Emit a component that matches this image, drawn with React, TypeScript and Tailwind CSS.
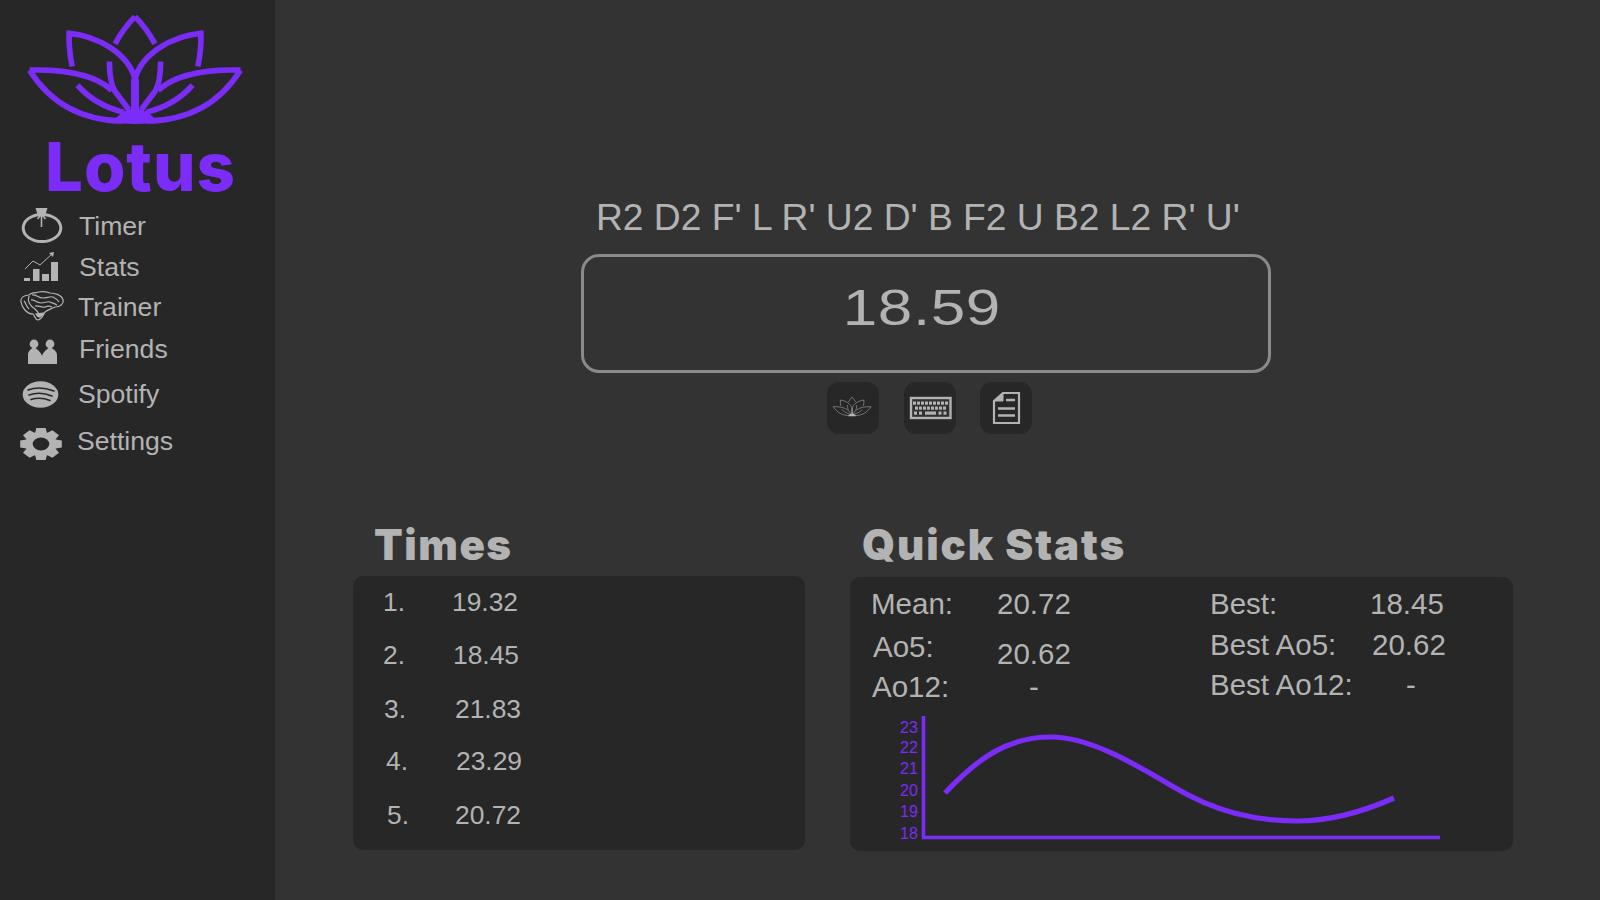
import React from "react";

const sans = "font-['Liberation_Sans',sans-serif]";
const PURPLE = "#7b2cf6";
const GRAY = "#b3b3b3";

function LotusHalf({ sw }: { sw: number }) {
  return (
    <g fill="none" strokeWidth={sw} strokeLinecap="butt" strokeLinejoin="miter">
      <path d="M405,50 C385,70 362,100 345,132" />
      <path d="M216,200 C210,170 205,140 207,100 C290,108 385,160 405,238" />
      <path d="M88,211 C190,208 285,225 336,272" />
      <path d="M88,211 C150,310 240,362 370,364" />
      <path d="M328,185 C328,220 332,255 345,275 C360,295 372,310 386,330" />
      <path d="M232,256 C270,300 320,325 372,338" />
      <path d="M405,238 L405,335" strokeWidth={sw * 1.4} />
    </g>
  );
}

function Lotus({ color, sw, className }: { color: string; sw: number; className: string }) {
  return (
    <svg viewBox="0 0 840 400" className={className} stroke={color} fill="none">
      <LotusHalf sw={sw} />
      <g transform="translate(810,0) scale(-1,1)">
        <LotusHalf sw={sw} />
      </g>
      <path d="M335,368 Q405,285 475,368 Q405,378 335,368 Z" fill={color} stroke="none" />
    </svg>
  );
}

function TimerIcon() {
  return (
    <svg viewBox="20 206 44 40" className="w-[44px] h-[40px] shrink-0" fill="none" stroke={GRAY}>
      <ellipse cx="42" cy="228" rx="18.8" ry="13.6" strokeWidth="3" />
      <path d="M35.5,208 H47.5 L45.5,214.5 H37.5 Z" fill={GRAY} stroke="none" />
      <path d="M41.5,227 V214 M37.5,219 L41.5,214 L45.5,219" strokeWidth="1.6" />
    </svg>
  );
}

function StatsIcon() {
  return (
    <svg viewBox="20 246 44 40" className="w-[44px] h-[40px] shrink-0" fill={GRAY}>
      <rect x="24" y="277" width="6" height="3" />
      <rect x="33" y="268" width="6.5" height="12" />
      <rect x="42" y="273" width="7" height="7" />
      <rect x="51" y="261" width="7" height="19" />
      <path d="M25,268 L33,260 L40,264 L53,252" fill="none" stroke={GRAY} strokeWidth="1" />
      <path d="M49,252 L54,251 L53,256 Z" />
    </svg>
  );
}

function BrainIcon() {
  return (
    <svg viewBox="20 287 44 40" className="w-[44px] h-[40px] shrink-0" fill="none" stroke={GRAY} strokeWidth="1.2">
      <path d="M21,302 C20,297 25,295 29,295 C31,292 37,293 39,292 C43,291 47,292 50,293 C55,293 62,295 63,300 C64,304 60,307 55,307 C51,309 47,310 45,312 C43,315 42,319 38,320 C35,320 35,316 33,314 C27,314 22,308 21,302 Z" />
      <path d="M29,296 C27,301 30,306 35,309 C37,311 38,312 39,314" />
      <path d="M32,295 C36,294 38,298 43,298 C47,298 50,296 53,297 C55,298 57,299 59,302" />
      <path d="M31,300 C34,299 36,303 41,303 C45,303 47,301 50,302 C52,303 54,303 57,305" />
      <path d="M35,306 C38,305 41,308 45,307 C47,306 50,306 52,307" />
      <path d="M24,301 C26,303 26,306 29,309" />
      <path d="M36,314 C38,318 41,318 44,313 Z" fill={GRAY} />
    </svg>
  );
}

function FriendsIcon() {
  return (
    <svg viewBox="20 328 44 40" className="w-[44px] h-[40px] shrink-0" fill={GRAY}>
      <circle cx="34" cy="343" r="4.4" />
      <circle cx="50" cy="343" r="4.4" />
      <path d="M28,363 V354 C28,350 31,348 34,346 C37,348 41,351 42,355 C43,351 47,348 50,346 C53,348 57,350 57,354 V363 Z" />
    </svg>
  );
}

function SpotifyIcon() {
  return (
    <svg viewBox="20 374 44 40" className="w-[44px] h-[40px] shrink-0">
      <ellipse cx="40.5" cy="394.5" rx="17.8" ry="13.2" fill={GRAY} />
      <g fill="none" stroke="#272727" strokeWidth="1.6" strokeLinecap="round">
        <path d="M28,390 C36,387 46,388 54,391" />
        <path d="M29,395 C36,392.5 45,393 52,396" />
        <path d="M31,399.5 C37,397.5 44,398 50,400.5" />
      </g>
    </svg>
  );
}

function GearIcon() {
  const angles = [0, 45, 90, 135, 180, 225, 270, 315];
  return (
    <svg viewBox="20 421 44 40" className="w-[44px] h-[40px] shrink-0">
      <g transform="translate(41,444) scale(1.3,1)" fill={GRAY}>
        {angles.map((a) => (
          <path key={a} d="M-3.6,-16 H3.6 L5,-9 H-5 Z" transform={`rotate(${a})`} />
        ))}
        <circle r="12" />
        <circle r="6.4" fill="#272727" />
      </g>
    </svg>
  );
}

function KeyboardIcon() {
  const rows: [number, number[]][] = [
    [401.5, [913, 917, 921, 925, 929, 933, 937, 941, 945]],
    [406.5, [915, 919, 923, 927, 931, 935, 939, 943]],
  ];
  return (
    <svg viewBox="904 382 52 52" className="w-[52px] h-[52px]">
      <rect x="911" y="398" width="39.5" height="20" fill="#b3b3b3" fillOpacity="0.08" stroke={GRAY} strokeWidth="2.4" />
      {rows.map(([y, xs]) =>
        xs.map((x) => <rect key={`${x}-${y}`} x={x} y={y} width="3" height="3.2" fill={GRAY} />),
      )}
      <rect x="914" y="411.5" width="3" height="3.2" fill={GRAY} />
      <rect x="919" y="411.5" width="3" height="3.2" fill={GRAY} />
      <rect x="925" y="411.5" width="11" height="3.2" fill={GRAY} />
      <rect x="938.5" y="411.5" width="3" height="3.2" fill={GRAY} />
      <rect x="943.5" y="411.5" width="3" height="3.2" fill={GRAY} />
    </svg>
  );
}

function DocIcon() {
  return (
    <svg viewBox="980 382 52 52" className="w-[52px] h-[52px]" fill="none" stroke={GRAY}>
      <path d="M1003,393 H1019 V423 H994 V401 Z" strokeWidth="2.2" />
      <path d="M1003,393 V401 H994 Z" fill={GRAY} strokeWidth="1" />
      <path d="M1006,400 H1015 M998,408.5 H1015 M998,415.5 H1015" strokeWidth="2.6" />
    </svg>
  );
}

const nav = [
  { label: "Timer", icon: <TimerIcon />, row: "mt-0", text: "ml-[15px]" },
  { label: "Stats", icon: <StatsIcon />, row: "mt-[1px]", text: "ml-[15px]" },
  { label: "Trainer", icon: <BrainIcon />, row: "mt-0", text: "ml-[14px]" },
  { label: "Friends", icon: <FriendsIcon />, row: "mt-[2px]", text: "ml-[15px]" },
  { label: "Spotify", icon: <SpotifyIcon />, row: "mt-[5px]", text: "ml-[14px]" },
  { label: "Settings", icon: <GearIcon />, row: "mt-[7px]", text: "ml-[13px]" },
];

const times = [
  { n: "1.", v: "19.32", row: "mt-0", num: "ml-[30px] w-[69px]" },
  { n: "2.", v: "18.45", row: "mt-[13px]", num: "ml-[30px] w-[70px]" },
  { n: "3.", v: "21.83", row: "mt-[14px]", num: "ml-[31px] w-[71px]" },
  { n: "4.", v: "23.29", row: "mt-[12px]", num: "ml-[33px] w-[70px]" },
  { n: "5.", v: "20.72", row: "mt-[14px]", num: "ml-[34px] w-[68px]" },
];

function Chart() {
  const labels: [string, number][] = [
    ["23", 727],
    ["22", 747],
    ["21", 768],
    ["20", 790],
    ["19", 811],
    ["18", 833],
  ];
  return (
    <svg viewBox="895 710 550 135" className="w-[550px] h-[135px] ml-[45px] mt-[3px]" fill="none">
      <path d="M923.5,716 V837.5 H1440" stroke={PURPLE} strokeWidth="3.6" />
      <path
        d="M945,793 C978,758 1008,737 1051,737 C1088,737 1130,761 1172,786 C1215,812 1255,821 1298,821 C1330,821 1360,813 1394,798"
        stroke={PURPLE}
        strokeWidth="5.2"
      />
      {labels.map(([t, y]) => (
        <text key={t} x="900" y={y + 5.5} fill={PURPLE} fontSize="16" fontFamily="Liberation Sans">
          {t}
        </text>
      ))}
    </svg>
  );
}

export default function App() {
  return (
    <div className={`flex w-[1600px] h-[900px] overflow-hidden bg-[#333333] text-[#b3b3b3] ${sans}`}>
      <aside className="w-[275px] shrink-0 bg-[#272727]">
        <Lotus color={PURPLE} sw={17} className="w-[280px] h-[133px]" />
        <div className="font-['Inter',sans-serif] font-extrabold text-[67px] leading-[67px] tracking-[1px] text-[#7b2cf6] pl-[45px]">
          Lotus
        </div>
        <nav className="mt-[6px]">
          {nav.map((item) => (
            <div key={item.label} className={`flex items-center h-[40px] pl-[20px] ${item.row}`}>
              {item.icon}
              <span className={`text-[26.6px] mt-[2px] ${item.text}`}>{item.label}</span>
            </div>
          ))}
        </nav>
      </aside>

      <main className="flex-1 pt-[195px] pl-[78px]">
        <div className="h-[44px] ml-[243px] text-[37.2px] leading-[44px] whitespace-nowrap">
          R2 D2 F' L R' U2 D' B F2 U B2 L2 R' U'
        </div>
        <div className="mt-[15px] ml-[228px] w-[690px] h-[119px] rounded-[18px] border-[3px] border-[#8a8a8a] flex items-center justify-center pb-[12px] pr-[9px]">
          <span className="text-[50px] leading-none scale-x-[1.24] tracking-[0.5px]">18.59</span>
        </div>
        <div className="mt-[9px] ml-[474px] flex gap-[24px]">
          <button className="w-[52px] h-[52px] rounded-[12px] bg-[#272727] flex items-center justify-center pb-[4px]">
            <Lotus color={GRAY} sw={9} className="w-[50px] h-[24px]" />
          </button>
          <button className="w-[52px] h-[52px] rounded-[12px] bg-[#272727] ml-[1px]">
            <KeyboardIcon />
          </button>
          <button className="w-[52px] h-[52px] rounded-[12px] bg-[#272727]">
            <DocIcon />
          </button>
        </div>

        <div className="mt-[87px] flex gap-[45px]">
          <section className="w-[452px]">
            <h2 className="ml-[21px] h-[48px] font-['Inter',sans-serif] font-black text-[42px] leading-[48px] tracking-[1.5px]">
              Times
            </h2>
            <div className="mt-[7px] h-[274px] rounded-[10px] bg-[#272727] pt-[7px]">
              {times.map((t) => (
                <div key={t.n} className={`flex items-center h-[40px] text-[26.4px] ${t.row}`}>
                  <span className={t.num}>{t.n}</span>
                  <span>{t.v}</span>
                </div>
              ))}
            </div>
          </section>

          <section className="w-[663px]">
            <h2 className="ml-[12px] h-[48px] font-['Inter',sans-serif] font-black text-[42px] leading-[48px] tracking-[1.9px] whitespace-nowrap">
              Quick Stats
            </h2>
            <div className="mt-[8px] h-[274px] rounded-[10px] bg-[#272727] pt-[7px] text-[29.5px]">
              <div className="flex pl-[21px]">
                <div className="w-[339px]">
                  <div className="flex items-center h-[40px]">
                    <span className="w-[126px]">Mean:</span>
                    <span>20.72</span>
                  </div>
                  <div className="flex items-center h-[40px] mt-[3px]">
                    <span className="w-[124px] ml-[2px]">Ao5:</span>
                    <span className="mt-[14px]">20.62</span>
                  </div>
                  <div className="flex items-center h-[40px]">
                    <span className="w-[157px] ml-[1px]">Ao12:</span>
                    <span>-</span>
                  </div>
                </div>
                <div>
                  <div className="flex items-center h-[40px]">
                    <span className="w-[160px]">Best:</span>
                    <span>18.45</span>
                  </div>
                  <div className="flex items-center h-[40px] mt-[1px]">
                    <span className="w-[162px]">Best Ao5:</span>
                    <span>20.62</span>
                  </div>
                  <div className="flex items-center h-[40px]">
                    <span className="w-[196px]">Best Ao12:</span>
                    <span>-</span>
                  </div>
                </div>
              </div>
              <Chart />
            </div>
          </section>
        </div>
      </main>
    </div>
  );
}
